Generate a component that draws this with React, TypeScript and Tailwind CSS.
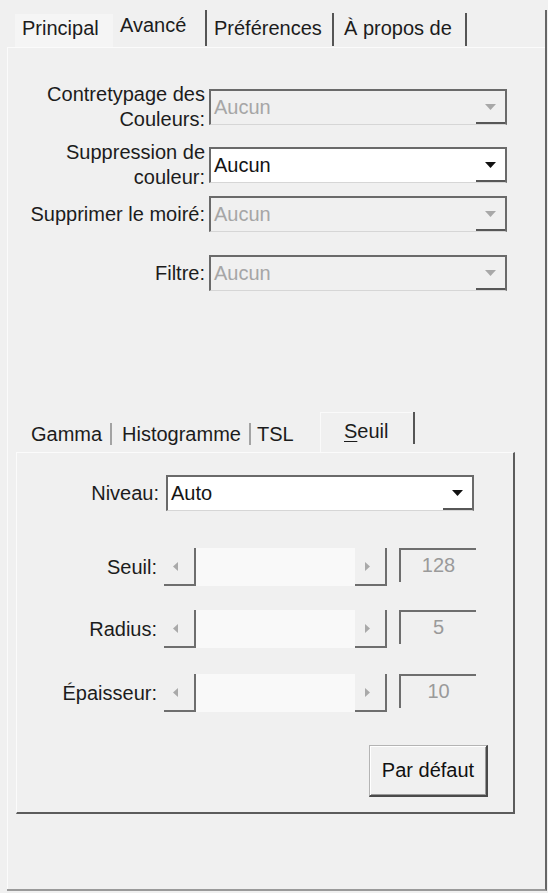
import React from "react";

/* ======================================================
   PIECES
====================================================== */

function Tri({ dir, color }: { dir: "down" | "left" | "right"; color: string }) {
  if (dir === "down") {
    return (
      <svg width="11" height="6" viewBox="0 0 11 6" fill={color}>
        <path d="M0 0h11L5.5 6z" />
      </svg>
    );
  }
  return (
    <svg width="5" height="9" viewBox="0 0 5 9" fill={color}>
      {dir === "left" ? <path d="M5 0v9L0 4.5z" /> : <path d="M0 0v9l5-4.5z" />}
    </svg>
  );
}

type ComboProps = { value: string; disabled?: boolean; className?: string };

function Combo({ value, disabled = false, className = "" }: ComboProps) {
  return (
    <div
      className={`flex h-[36px] border-t-2 border-l-2 border-r-2 border-b border-[#6a6a6a] border-b-[#d6d6d6] ${
        disabled ? "bg-[#f0f0f0] text-[#a6a6a6]" : "bg-white text-[#141414]"
      } ${className}`}
    >
      <span className="flex-1 pl-[3px] leading-[33px]">{value}</span>
      <span className="w-[29px] flex items-center justify-center border-b-2 border-[#575757]">
        <Tri dir="down" color={disabled ? "#a8a8a8" : "#111111"} />
      </span>
    </div>
  );
}

function ScrollRow({ label, value, className = "" }: { label: string; value: string; className?: string }) {
  return (
    <div className={`flex items-center h-[38px] ${className}`}>
      <div className="w-[140px] text-right leading-[23px]">{label}</div>
      <div className="ml-[7px] flex h-[38px]">
        <div className="w-[32px] flex items-center justify-center pr-[8px] bg-[#f0f0f0] border-r-2 border-b-2 border-[#6e6e6e]">
          <Tri dir="left" color="#a9a9a9" />
        </div>
        <div className="w-[159px] bg-[#f9f9f9]" />
        <div className="w-[32px] flex items-center justify-center pr-[5px] bg-[#f0f0f0] border-r-2 border-b-2 border-[#6e6e6e]">
          <Tri dir="right" color="#a9a9a9" />
        </div>
      </div>
      <div className="ml-[12px] w-[77px] h-[34px] self-start border-t-2 border-l-2 border-[#6e6e6e] bg-[#f0f0f0] text-center leading-[31px] text-[#9a9a9a]">
        {value}
      </div>
    </div>
  );
}

/* ======================================================
   APP
====================================================== */

export default function App() {
  return (
    <div className="w-[548px] h-[893px] bg-[#f0f0f0] pt-[10px] pl-[7px] pr-[1px] pb-[2px] font-['Liberation_Sans',Arial,sans-serif] text-[20px] text-[#1c1c1c] overflow-hidden">
      <div className="h-full flex flex-col border-r-2 border-b-2 border-r-[#666666] border-b-[#9a9a9a]">
        {/* TOP TABS */}
        <div className="flex h-[37px] shrink-0">
          <div className="ml-[8px] w-[98px] mt-[4px] pl-[7px] pt-[3px] leading-[23px] bg-[#f5f5f5]">Principal</div>
          <div className="w-[92px] pl-[7px] pt-[4px] leading-[23px]">Avancé</div>
          <div className="w-[2px] h-[36px] bg-[#555555]" />
          <div className="w-[125px] pl-[7px] pt-[7px] leading-[23px]">Préférences</div>
          <div className="w-[2px] mt-[3px] h-[33px] bg-[#555555]" />
          <div className="w-[131px] pl-[10px] pt-[7px] leading-[23px]">À propos de</div>
          <div className="w-[2px] mt-[3px] h-[33px] bg-[#555555]" />
        </div>

        {/* MAIN PANEL */}
        <div className="flex-1 flex flex-col border-t border-l border-[#fbfbfb]">
          <div className="mt-[41px] flex items-center h-[36px]">
            <div className="w-[197px] text-right leading-[25px]">
              Contretypage des
              <br />
              Couleurs:
            </div>
            <Combo value="Aucun" disabled className="ml-[4px] w-[298px]" />
          </div>

          <div className="mt-[22px] flex items-center h-[36px]">
            <div className="w-[197px] text-right leading-[25px]">
              Suppression de
              <br />
              couleur:
            </div>
            <Combo value="Aucun" className="ml-[4px] w-[298px]" />
          </div>

          <div className="mt-[13px] flex items-center h-[36px]">
            <div className="w-[197px] text-right leading-[23px]">Supprimer le moiré:</div>
            <Combo value="Aucun" disabled className="ml-[4px] w-[298px]" />
          </div>

          <div className="mt-[23px] flex items-center h-[36px]">
            <div className="w-[197px] text-right leading-[23px]">Filtre:</div>
            <Combo value="Aucun" disabled className="ml-[4px] w-[298px]" />
          </div>

          {/* SUB TABS */}
          <div className="mt-[121px] ml-[8px] flex h-[40px] shrink-0">
            <div className="w-[94px] pl-[15px] pt-[11px] leading-[23px]">Gamma</div>
            <div className="w-[2px] mt-[11px] h-[22px] bg-[#a3a3a3]" />
            <div className="w-[137px] pl-[10px] pt-[11px] leading-[23px]">Histogramme</div>
            <div className="w-[2px] mt-[11px] h-[22px] bg-[#a3a3a3]" />
            <div className="w-[69px] pl-[6px] pt-[11px] leading-[23px]">TSL</div>
            <div className="w-[93px] pl-[23px] pt-[7px] leading-[23px] border-t border-l border-[#fafafa]">
              <span className="underline underline-offset-[3px] decoration-1">S</span>euil
            </div>
            <div className="w-[2px] h-[32px] bg-[#555555]" />
          </div>

          <div className="ml-[8px] w-[499px] h-[362px] shrink-0 flex flex-col border-t border-l border-[#fbfbfb] border-r-2 border-b-2 border-r-[#5c5c5c] border-b-[#5c5c5c]">
            <div className="mt-[22px] flex items-center h-[36px]">
              <div className="w-[142px] text-right leading-[23px]">Niveau:</div>
              <Combo value="Auto" className="ml-[7px] w-[308px]" />
            </div>

            <ScrollRow label="Seuil:" value="128" className="mt-[37px]" />
            <ScrollRow label="Radius:" value="5" className="mt-[24px]" />
            <ScrollRow label="Épaisseur:" value="10" className="mt-[26px]" />

            <button className="mt-[33px] ml-[352px] w-[119px] h-[52px] bg-[#f0f0f0] border-t border-l border-[#b4b4b4] border-r-2 border-b-2 border-r-[#4a4a4a] border-b-[#4a4a4a] shadow-[inset_1px_1px_0_#ffffff,inset_-1px_-1px_0_#9a9a9a] text-[#111111] leading-[23px]">
              Par défaut
            </button>
          </div>

          <div className="flex-1" />
        </div>
      </div>
    </div>
  );
}
